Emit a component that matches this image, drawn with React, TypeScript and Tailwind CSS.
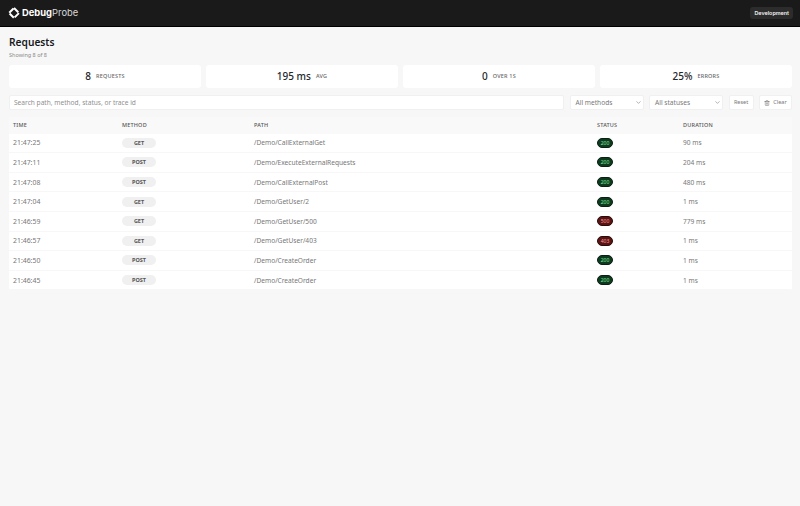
import { ChevronDown, Trash2 } from "lucide-react";

const rows = [
  ["21:47:25", "GET", "/Demo/CallExternalGet", "200", "90 ms"],
  ["21:47:11", "POST", "/Demo/ExecuteExternalRequests", "200", "204 ms"],
  ["21:47:08", "POST", "/Demo/CallExternalPost", "200", "480 ms"],
  ["21:47:04", "GET", "/Demo/GetUser/2", "200", "1 ms"],
  ["21:46:59", "GET", "/Demo/GetUser/500", "500", "779 ms"],
  ["21:46:57", "GET", "/Demo/GetUser/403", "403", "1 ms"],
  ["21:46:50", "POST", "/Demo/CreateOrder", "200", "1 ms"],
  ["21:46:45", "POST", "/Demo/CreateOrder", "200", "1 ms"],
];

const stats = [
  ["8", "REQUESTS"],
  ["195 ms", "AVG"],
  ["0", "OVER 1S"],
  ["25%", "ERRORS"],
];

const grid = "grid grid-cols-[109px_132px_343px_86px_1fr] items-center px-1";

export default function App() {
  return (
    <div className="min-h-[506px] bg-[#f7f7f7] antialiased font-['Noto_Sans','Open_Sans',sans-serif] text-[#1f2328]">
      <header className="h-[27px] bg-[#1a1a1a] border-b border-black flex items-center justify-between pl-2 pr-[7px]">
        <div className="flex items-center gap-[2px]">
          <svg width="12" height="12" viewBox="0 0 12 12" fill="none">
            <path d="M6 1 L11 6 L6 11 L1 6 Z" stroke="#fff" strokeWidth="2" strokeDasharray="6 1.2" />
          </svg>
          <span className="text-[9.4px] leading-none font-['Inter',sans-serif] text-white">
            <span className="font-bold">Debug</span>
            <span className="text-[#d8d8d8]">Probe</span>
          </span>
        </div>
        <span className="bg-[#2c2c2c] rounded-[3px] px-1 py-[2px] text-[5.4px] leading-[8px] font-semibold text-[#f0f0f0] font-['Inter',sans-serif]">
          Development
        </span>
      </header>

      <main className="pl-[9px] pr-[8px] pt-[8px]">
        <h1 className="text-[10.2px] leading-[15px] font-semibold text-[#16191d]">Requests</h1>
        <p className="text-[5.5px] leading-[8px] mt-[1px] text-[#8a8a8a]">Showing 8 of 8</p>

        <section className="grid grid-cols-4 gap-[5px] mt-[6px]">
          {stats.map(([v, l]) => (
            <div key={l} className="h-[23px] bg-white rounded-[3px] flex items-center justify-center gap-[5px]">
              <span className="text-[10px] font-medium text-[#23272b]">{v}</span>
              <span className="text-[5.5px] font-medium tracking-[0.2px] text-[#666]">{l}</span>
            </div>
          ))}
        </section>

        <section className="flex gap-[5.5px] mt-[7px] h-[15px]">
          <div className="flex-1 bg-white rounded-[2px] border border-[#f0f0f0] flex items-center pl-1 text-[6.6px] text-[#8f8f8f]">
            Search path, method, status, or trace id
          </div>
          <div className="w-[74px] bg-white rounded-[2px] border border-[#f0f0f0] flex items-center justify-between pl-[5px] pr-[1px] text-[6.6px] text-[#777]">
            All methods <ChevronDown size={7} strokeWidth={1.5} color="#555" />
          </div>
          <div className="w-[74px] bg-white rounded-[2px] border border-[#f0f0f0] flex items-center justify-between pl-[5px] pr-[1px] text-[6.6px] text-[#777]">
            All statuses <ChevronDown size={7} strokeWidth={1.5} color="#555" />
          </div>
          <div className="w-[25px] bg-white rounded-[2px] border border-[#f0f0f0] flex items-center justify-center text-[5.5px] text-[#777]">
            Reset
          </div>
          <div className="w-[33px] bg-white rounded-[2px] border border-[#f0f0f0] flex items-center justify-center gap-[3px] text-[5.5px] text-[#777]">
            <Trash2 size={6} strokeWidth={1.5} color="#444" /> Clear
          </div>
        </section>

        <section className="mt-[7px] rounded-[2px] overflow-hidden">
          <div className={`${grid} h-[16.6px] bg-[#f9f9f9] text-[5.5px] leading-[8px] font-medium tracking-[0.2px] text-[#555]`}>
            <span>TIME</span>
            <span>METHOD</span>
            <span>PATH</span>
            <span>STATUS</span>
            <span>DURATION</span>
          </div>
          {rows.map(([t, m, p, s, d], i) => (
            <div key={i} className={`${grid} h-[19.6px] bg-white border-b border-[#f7f7f7] text-[6.6px] leading-[10px] text-[#777]`}>
              <span className="text-[6.9px] pt-[1px]">{t}</span>
              <span className="flex">
                <span className="inline-flex w-[34px] h-[10px] items-center justify-center rounded-full bg-[#f0f0f0] text-[5.5px] font-bold text-[#555]">
                  {m}
                </span>
              </span>
              <span className="pt-[1px]">{p}</span>
              <span className="flex">
                {s === "200" ? (
                  <span className="inline-flex w-[16px] h-[10px] items-center justify-center rounded-full bg-[#0e3b1f] border border-[#0b1f12] text-[5px] text-[#7be89a]">
                    {s}
                  </span>
                ) : (
                  <span className="inline-flex w-[16px] h-[10px] items-center justify-center rounded-full bg-[#5a1414] border border-[#2a0c0c] text-[5px] text-[#ff9a9a]">
                    {s}
                  </span>
                )}
              </span>
              <span className="pt-[1px]">{d}</span>
            </div>
          ))}
        </section>
      </main>
    </div>
  );
}
